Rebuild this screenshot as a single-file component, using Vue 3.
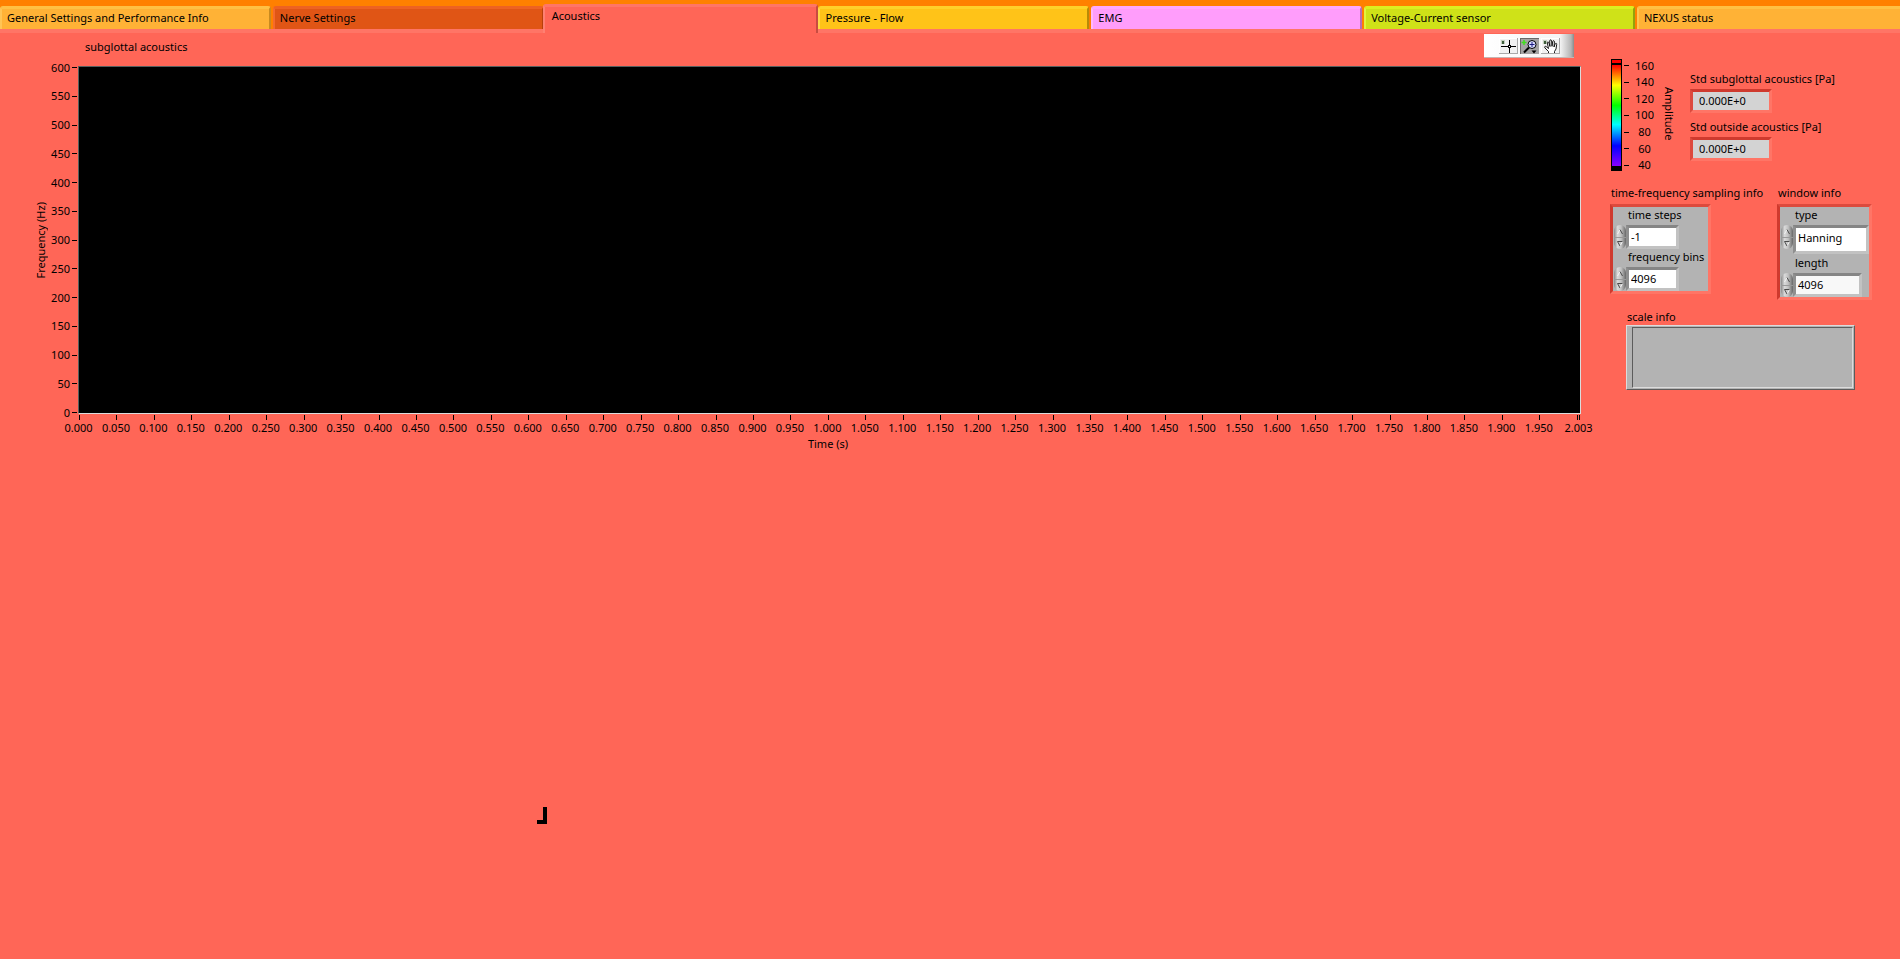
<script setup>
import { ref } from 'vue'

const tabs = [
  { name: 'General Settings and Performance Info', tone: 'amber' },
  { name: 'Nerve Settings', tone: 'rust' },
  { name: 'Acoustics', tone: 'coral' },
  { name: 'Pressure - Flow', tone: 'yellow' },
  { name: 'EMG', tone: 'pink' },
  { name: 'Voltage-Current sensor', tone: 'lime' },
  { name: 'NEXUS status', tone: 'amber' }
]
const active = ref('Acoustics')

const freqTicks = Array.from({ length: 13 }, (_, i) => 600 - i * 50)
const timeTicks = Array.from({ length: 40 }, (_, i) => (i * 0.05).toFixed(3)).concat(['', '2.003'])
const ampTicks = [160, 140, 120, 100, 80, 60, 40]

const stdSub = ref('0.000E+0')
const stdOut = ref('0.000E+0')
const timeSteps = ref(-1)
const freqBins = ref(4096)
const windowTypes = ['Rectangle', 'Hanning', 'Hamming', 'Blackman']
const windowType = ref('Hanning')
const windowLength = ref(4096)

function cycleType(step) {
  const n = windowTypes.length
  windowType.value = windowTypes[(windowTypes.indexOf(windowType.value) + step + n) % n]
}
</script>

<template>
  <div class="front-panel">
    <nav class="tabs" role="tablist">
      <button
        v-for="t in tabs"
        :key="t.name"
        type="button"
        role="tab"
        class="tab"
        :class="[t.tone, { active: t.name === active }]"
        :aria-selected="t.name === active"
        @click="active = t.name"
      >{{ t.name }}</button>
    </nav>

    <main class="page">
      <section class="chart">
        <header class="chart-head">
          <span class="chart-title">subglottal acoustics</span>
          <div class="palette">
            <button type="button" class="tool" aria-label="Cursor movement tool">
              <svg viewBox="0 0 19 16" width="19" height="16" shape-rendering="crispEdges">
                <rect x="2" y="2" width="4" height="4" fill="#c3d0bf" />
                <rect x="3" y="3" width="2" height="3" fill="#3d5c3a" />
                <path d="M2 8h15v1H2zM10 2h1v13h-1zM9 7h3v3H9z" fill="#000" />
                <rect x="10" y="8" width="1" height="1" fill="#fff" />
              </svg>
            </button>
            <button type="button" class="tool pressed" aria-label="Zoom">
              <svg viewBox="0 0 19 16" width="19" height="16">
                <path d="M4 2v5M1.500 4.500h5" stroke="#3ee01c" stroke-width="1.500" fill="none" />
                <path d="M9 9.500l-5 5" stroke="#000" stroke-width="2" />
                <circle cx="12" cy="6.500" r="4" fill="#d8dcff" stroke="#000" />
                <path d="M12 4v5M9.500 6.500h5" stroke="#1a1a80" fill="none" />
                <path d="M11.500 12.500h5l-2.500 3z" fill="#000" />
              </svg>
            </button>
            <button type="button" class="tool" aria-label="Pan">
              <svg viewBox="0 0 19 16" width="19" height="16">
                <rect x="2" y="2" width="4" height="4" fill="#c3d0bf" />
                <rect x="3" y="3" width="2" height="3" fill="#3d5c3a" />
                <path
                  d="M7.500 15v-1.500L4 10c-1-1.400.3-2.200 1.300-1.300L7.500 10.500 6.300 5c-.2-1.400 1.300-1.500 1.600-.2L9 8.500 8.700 3c0-1.500 1.800-1.500 1.900 0l.4 5.300.7-4.800c.3-1.300 1.800-1 1.700.3L13 9l1.200-3.200c.6-1 1.700-.5 1.500.6L15 11l-1.500 2.500V15"
                  fill="#fff" stroke="#000" stroke-width=".9"
                />
              </svg>
            </button>
          </div>
        </header>

        <div class="plot-grid">
          <div class="y-title"><span>Frequency (Hz)</span></div>
          <ol class="y-axis">
            <li v-for="f in freqTicks" :key="f">{{ f }}</li>
          </ol>
          <div class="plot"></div>
          <ol class="x-axis">
            <li v-for="(t, i) in timeTicks" :key="i"><span>{{ t }}</span></li>
          </ol>
          <div class="x-title">Time (s)</div>
        </div>
      </section>

      <aside class="side">
        <div class="readouts">
          <div class="amp">
            <div class="ramp"><div class="ramp-top"></div><div class="ramp-body"></div></div>
            <ol class="amp-axis">
              <li v-for="a in ampTicks" :key="a"><span>{{ a }}</span></li>
            </ol>
            <span class="amp-title">Amplitude</span>
          </div>
          <div class="stds">
            <label class="std">
              <span>Std subglottal acoustics [Pa]</span>
              <input v-model="stdSub" type="text" readonly />
            </label>
            <label class="std">
              <span>Std outside acoustics [Pa]</span>
              <input v-model="stdOut" type="text" readonly />
            </label>
          </div>
        </div>

        <div class="clusters">
          <div class="sampling">
            <span class="caption">time-frequency sampling info</span>
            <div class="cluster">
              <label for="steps">time steps</label>
              <div class="field">
                <div class="spin">
                  <button type="button" aria-label="Increase time steps" @click="timeSteps++"><svg viewBox="0 0 12 12" width="12" height="12"><path class="lit" d="M3.500 9L6 4.500" /><path class="dark" d="M6 4.500L8.500 9" /></svg></button>
                  <button type="button" aria-label="Decrease time steps" @click="timeSteps--"><svg viewBox="0 0 12 12" width="12" height="12"><path class="lit" d="M8.500 3.500L6 8" /><path class="dark" d="M8.500 3.500h-5L6 8" /></svg></button>
                </div>
                <input id="steps" v-model="timeSteps" type="text" class="short" />
              </div>
              <label for="bins">frequency bins</label>
              <div class="field">
                <div class="spin">
                  <button type="button" aria-label="Increase frequency bins" @click="freqBins++"><svg viewBox="0 0 12 12" width="12" height="12"><path class="lit" d="M3.500 9L6 4.500" /><path class="dark" d="M6 4.500L8.500 9" /></svg></button>
                  <button type="button" aria-label="Decrease frequency bins" @click="freqBins--"><svg viewBox="0 0 12 12" width="12" height="12"><path class="lit" d="M8.500 3.500L6 8" /><path class="dark" d="M8.500 3.500h-5L6 8" /></svg></button>
                </div>
                <input id="bins" v-model="freqBins" type="text" class="short" />
              </div>
            </div>
          </div>

          <div class="window">
            <span class="caption">window info</span>
            <div class="cluster">
              <label for="wtype">type</label>
              <div class="field type-field">
                <div class="spin">
                  <button type="button" aria-label="Next type" @click="cycleType(1)"><svg viewBox="0 0 12 12" width="12" height="12"><path class="lit" d="M3.500 9L6 4.500" /><path class="dark" d="M6 4.500L8.500 9" /></svg></button>
                  <button type="button" aria-label="Previous type" @click="cycleType(-1)"><svg viewBox="0 0 12 12" width="12" height="12"><path class="lit" d="M8.500 3.500L6 8" /><path class="dark" d="M8.500 3.500h-5L6 8" /></svg></button>
                </div>
                <select id="wtype" v-model="windowType">
                  <option v-for="w in windowTypes" :key="w">{{ w }}</option>
                </select>
              </div>
              <label for="wlen">length</label>
              <div class="field">
                <div class="spin">
                  <button type="button" aria-label="Increase length" @click="windowLength++"><svg viewBox="0 0 12 12" width="12" height="12"><path class="lit" d="M3.500 9L6 4.500" /><path class="dark" d="M6 4.500L8.500 9" /></svg></button>
                  <button type="button" aria-label="Decrease length" @click="windowLength--"><svg viewBox="0 0 12 12" width="12" height="12"><path class="lit" d="M8.500 3.500L6 8" /><path class="dark" d="M8.500 3.500h-5L6 8" /></svg></button>
                </div>
                <input id="wlen" v-model="windowLength" type="text" class="long" />
              </div>
            </div>
          </div>
        </div>

        <div class="scale">
          <span class="caption">scale info</span>
          <div class="scale-box"><div class="scale-inner"></div></div>
        </div>
      </aside>
    </main>

    <div class="corner-mark"></div>
  </div>
</template>

<style>
html,
body {
  background: #ff6657;
}
</style>

<style scoped>
.front-panel {
  min-height: 100vh;
  overflow: hidden;
  background: #ff6657;
  color: #000;
  font-family: "Noto Sans", "Open Sans", sans-serif;
  font-size: 11px;
  line-height: 16px;
}
button,
input,
select {
  font: inherit;
  color: inherit;
  margin: 0;
  box-sizing: border-box;
}
ol {
  list-style: none;
  margin: 0;
  padding: 0;
}

/* tab strip */
.tabs {
  display: grid;
  grid-template-columns: repeat(7, 14.36%);
  align-items: end;
  height: 33px;
  background: linear-gradient(#ff8000 29px, #ff7566 29px);
}
.tab {
  height: 23px;
  margin: 0 2px 4px 0;
  padding: 0 5px 2px;
  border: 0;
  border-top: 3px solid;
  border-left: 2px solid;
  border-right: 2px solid;
  border-radius: 3px 3px 0 0;
  text-align: left;
  white-space: nowrap;
  line-height: 16px;
}
.amber { background: #ffb236; border-color: #ffc044 #c88a20 #ffb236 #ffc455; }
.rust { background: #e05515; border-color: #ee6222 #b8400c #e05515 #f56a2c; }
.coral { background: #ff6657; border-color: #ff7566 #c84c40 #ff6657 #ff8072; }
.yellow { background: #ffc318; border-color: #ffd02a #b88a08 #ffc318 #ffd84a; }
.pink { background: #ff9dfb; border-color: #ffa8ff #b86cb4 #ff9dfb #ffb8ff; }
.lime { background: #cfe218; border-color: #dcf020 #93a20c #cfe218 #e2f440; }
.tab.active {
  height: 29px;
  margin: 0 0 0 -3px;
  padding: 0 7px 9px;
}

.page {
  display: flex;
  align-items: flex-start;
}

/* spectrogram */
.chart {
  flex: 1;
  min-width: 0;
  padding-left: 34px;
}
.chart-head {
  display: flex;
  justify-content: space-between;
  align-items: flex-start;
  height: 33px;
  padding: 1px 36px 0 51px;
  box-sizing: border-box;
}
.chart-title {
  padding-top: 5px;
}
.palette {
  display: flex;
  gap: 2px;
  align-items: flex-start;
  width: 90px;
  height: 24px;
  padding: 4px 0 0 15px;
  box-sizing: border-box;
  background: linear-gradient(90deg, #fff 0, #f4f4f4 76px, #b5b5b5 87px, #8b8b8b 90px);
  border-bottom: 1px solid #c6b5b2;
}
.tool {
  width: 19px;
  height: 16px;
  padding: 0;
  border: 0;
  background: #f1f1f1;
  box-shadow: inset -1px -1px #a8a8a8, inset 1px 1px #fff;
}
.tool.pressed {
  background: #a3a3a3;
  box-shadow: inset 1px 1px #696969;
}
.tool svg {
  display: block;
}
.plot-grid {
  display: grid;
  grid-template-columns: 14px 30px minmax(0, 1fr);
  grid-template-rows: 348px auto auto;
}
.y-title {
  display: flex;
  align-items: center;
  justify-content: center;
}
.y-title span {
  writing-mode: vertical-rl;
  transform: rotate(180deg);
  line-height: 14px;
}
.y-axis {
  display: flex;
  flex-direction: column;
  justify-content: space-between;
  padding: 1px 1px 1px 0;
}
.y-axis li {
  display: flex;
  align-items: center;
  justify-content: flex-end;
  gap: 2px;
  height: 1px;
}
.y-axis li::after {
  content: "";
  width: 5px;
  height: 1px;
  background: #000;
}
.plot {
  margin-right: 29px;
  background: #000;
  border: 1px solid;
  border-color: #55605f #dcdcdc #dcdcdc #55605f;
}
.x-axis {
  grid-column: 3;
  display: grid;
  grid-template-columns: repeat(40, minmax(0, 50fr)) minmax(0, 3fr) 1px;
  margin: 1px 30px 0 1px;
}
.x-axis li {
  display: flex;
  flex-direction: column;
  align-items: center;
  width: 1px;
  white-space: nowrap;
}
.x-axis li::before {
  content: "";
  width: 1px;
  height: 5px;
  background: #000;
}
.x-axis span {
  margin-right: 2px;
  line-height: 15px;
}
.x-title {
  grid-column: 3;
  margin-right: 32px;
  text-align: center;
  line-height: 18px;
}

/* right column */
.side {
  width: 290px;
  padding-top: 26px;
}
.readouts {
  display: flex;
  justify-content: space-between;
}
.amp {
  display: flex;
  padding-left: 1px;
}
.ramp {
  width: 11px;
  height: 112px;
  box-sizing: border-box;
  border: 1px solid #000;
  background: #000;
}
.ramp-top {
  height: 3px;
  margin-bottom: 2px;
  background: #f00;
}
.ramp-body {
  height: 101px;
  background: linear-gradient(#f00, #ff0 20%, #0f0 40%, #0ff 59%, #00f 80%, #80f);
}
.amp-axis {
  display: flex;
  flex-direction: column;
  justify-content: space-between;
  height: 101px;
  margin-top: 6px;
  padding-left: 2px;
}
.amp-axis li {
  display: flex;
  align-items: center;
  height: 1px;
}
.amp-axis li::before {
  content: "";
  width: 5px;
  height: 1px;
  background: #000;
}
.amp-axis span {
  width: 31px;
  text-align: center;
}
.amp-title {
  writing-mode: vertical-rl;
  margin: 28px 0 0 1px;
  line-height: 16px;
}
.stds {
  width: 210px;
  padding-top: 12px;
}
.std {
  display: block;
  height: 48px;
}
.std span {
  display: block;
  height: 18px;
}
.std input {
  display: block;
  width: 82px;
  height: 24px;
  padding: 0 6px 2px;
  background: #d3d3d3;
  border: 3px solid;
  border-color: #cf3a2e #ff7566 #ff7566 #dd4a3d;
  outline: 0;
}
.clusters {
  display: flex;
  gap: 66px;
  margin-top: 14px;
}
.clusters .caption {
  display: block;
  height: 19px;
  padding-left: 1px;
  white-space: nowrap;
}
.cluster {
  width: max-content;
  background: #b3b3b3;
  border: 3px solid;
  border-color: #dd4a3d #ff7566 #ff7566 #cf3a2e;
}
.sampling {
  width: 101px;
}
.sampling .cluster {
  width: 95px;
}
.cluster label {
  display: block;
  height: 18px;
  padding-left: 15px;
  white-space: nowrap;
}
.field {
  display: flex;
  align-items: flex-start;
}
.type-field {
  margin-bottom: 1px;
}
.spin {
  display: flex;
  flex-direction: column;
  width: 12px;
  height: 24px;
  margin-left: 1px;
  border-radius: 6px;
  overflow: hidden;
  background: linear-gradient(90deg, #8a8a8a, #dadada 30%, #c0c0c0 60%, #686868);
}
.spin button {
  width: 12px;
  height: 12px;
  padding: 0;
  border: 0;
  background: transparent;
}
.spin button + button {
  border-top: 1px solid #999;
}
.spin svg {
  display: block;
}
.spin path {
  fill: none;
}
.lit {
  stroke: #f4f4f4;
}
.dark {
  stroke: #4a4a4a;
}
.field input,
.field select {
  height: 24px;
  padding: 0 2px 2px;
  background: #fff;
  border: 3px solid;
  border-color: #858585 #c2c2c2 #c2c2c2 #8f8f8f;
  border-radius: 0;
  outline: 0;
}
.field select {
  width: 76px;
  height: 29px;
  padding-bottom: 4px;
  appearance: none;
}
.field .short {
  width: 53px;
}
.field .long {
  width: 69px;
  background: #f8f8f8;
}
.scale {
  width: 229px;
  margin: 9px 0 0 16px;
}
.scale .caption {
  display: block;
  height: 16px;
  padding-left: 1px;
}
.scale-box {
  height: 65px;
  box-sizing: border-box;
  padding: 1px 1px 1px 5px;
  background: #b3b3b3;
  border: 1px solid;
  border-color: #dcdcdc #5c5c5c #5c5c5c #dcdcdc;
}
.scale-inner {
  height: 100%;
  box-sizing: border-box;
  border: 1px solid;
  border-color: #5c5c5c #dcdcdc #dcdcdc #5c5c5c;
}

/* corner bracket of an empty decoration */
.corner-mark {
  width: 10px;
  height: 17px;
  margin: 354px 0 0 28.26%;
  box-sizing: border-box;
  background: linear-gradient(#000, #000) right / 4px 100% no-repeat,
    linear-gradient(#000, #000) bottom / 100% 4px no-repeat;
}
</style>
